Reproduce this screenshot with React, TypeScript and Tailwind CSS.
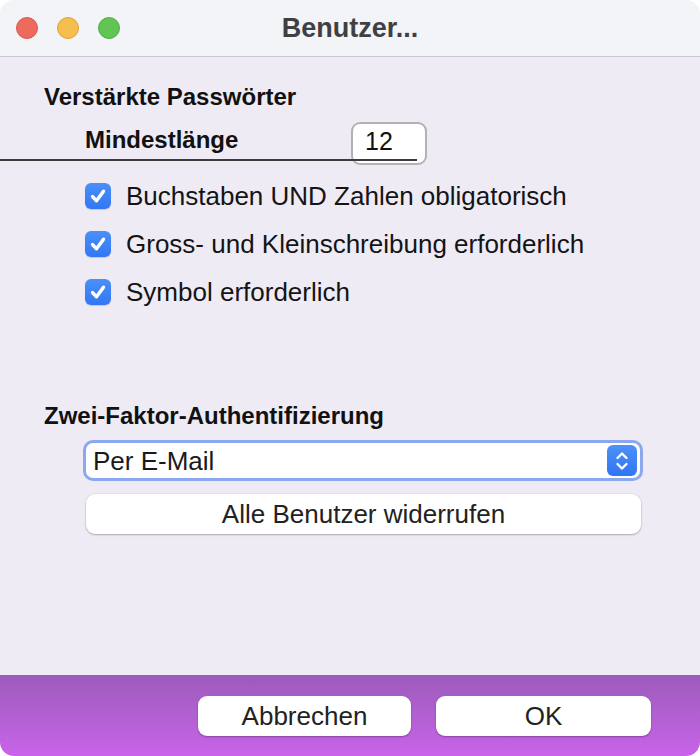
import React from "react";

const font = { fontFamily: '"Liberation Sans", Arial, Helvetica, sans-serif' };

function Check({ label }: { label: string }) {
  return (
    <div className="flex h-[48px] items-center pl-[85px]">
      <div className="flex h-[26px] w-[26px] items-center justify-center rounded-[6px] bg-gradient-to-b from-[#4b90f8] to-[#3276f5] shadow-[0_1px_1px_rgba(0,0,0,0.15)]">
        <svg width="20" height="20" viewBox="0 0 20 20">
          <path d="M4.5 10.5 L8.5 14.8 L15.5 5.2" fill="none" stroke="white" strokeWidth="3.4" strokeLinecap="round" strokeLinejoin="round" />
        </svg>
      </div>
      <span className="ml-[15px] text-[26px] leading-none text-[#141414]">{label}</span>
    </div>
  );
}

export default function App() {
  return (
    <div className="h-[756px] w-[700px] bg-white" style={font}>
      <div className="flex h-full flex-col overflow-hidden rounded-[14px]">
        <div className="grid h-[57px] shrink-0 grid-cols-[1fr_auto_1fr] items-center border-b border-[#cbc6d2] bg-[#f2f4f8]">
          <div className="flex items-center gap-[19px] pl-[16px]">
            <div className="h-[22px] w-[22px] rounded-full border border-[#d9574c] bg-[#ee6a5f]" />
            <div className="h-[22px] w-[22px] rounded-full border border-[#dea23a] bg-[#f5be4f]" />
            <div className="h-[22px] w-[22px] rounded-full border border-[#4fae43] bg-[#61c554]" />
          </div>
          <div className="text-[27px] font-bold leading-none text-[#404042]">Benutzer...</div>
          <div />
        </div>

        <div className="flex flex-1 flex-col bg-[#eeebf5]">
          <div className="mt-[26px] pl-[44px] text-[24px] font-bold leading-[28px] text-[#111]">Verstärkte Passwörter</div>

          <div className="relative mt-[11px] flex h-[43px] items-start">
            <div className="w-[351px] pl-[85px] pt-[4px] text-[24px] font-bold leading-[28px] text-[#111]">Mindestlänge</div>
            <div className="h-[43px] w-[76px] rounded-[9px] border-2 border-[#b3b1b6] bg-white pl-[12px] pt-[3px] text-[25px] leading-[28px] text-[#111]">12</div>
            <div className="absolute left-0 top-[37px] h-[2px] w-[417px] bg-[#3c3c3c]" />
          </div>

          <div className="mt-[7px] flex flex-col">
            <Check label="Buchstaben UND Zahlen obligatorisch" />
            <Check label="Gross- und Kleinschreibung erforderlich" />
            <Check label="Symbol erforderlich" />
          </div>

          <div className="mt-[86px] pl-[44px] text-[24px] font-bold leading-[28px] text-[#111]">Zwei-Faktor-Authentifizierung</div>

          <div className="ml-[83px] mt-[10px] flex h-[41px] w-[560px] items-center rounded-[10px] border-[3px] border-[#8ba7ef] bg-white pl-[7px] pr-[3px]">
            <span className="flex-1 text-[26px] leading-none text-[#1a1a1a]">Per E-Mail</span>
            <div className="flex h-[31px] w-[30px] items-center justify-center rounded-[6px] bg-gradient-to-b from-[#4d91f8] to-[#3174f4]">
              <svg width="16" height="24" viewBox="0 0 16 24">
                <path d="M3.5 9 L8 4.5 L12.5 9" fill="none" stroke="white" strokeWidth="2.4" strokeLinecap="round" strokeLinejoin="round" />
                <path d="M3.5 15 L8 19.5 L12.5 15" fill="none" stroke="white" strokeWidth="2.4" strokeLinecap="round" strokeLinejoin="round" />
              </svg>
            </div>
          </div>

          <div className="ml-[86px] mt-[13px] flex h-[40px] w-[555px] items-center justify-center rounded-[9px] bg-white text-[26px] leading-none text-[#222] shadow-[0_1px_2px_rgba(0,0,0,0.25),0_0_0_0.5px_rgba(0,0,0,0.08)]">
            Alle Benutzer widerrufen
          </div>
        </div>

        <div className="flex h-[81px] shrink-0 items-start justify-end gap-[25px] bg-gradient-to-b from-[#9c5bbb] to-[#c964ea] pr-[49px] pt-[21px]">
          <div className="flex h-[40px] w-[213px] items-center justify-center rounded-[9px] bg-white text-[26px] leading-none text-[#222] shadow-[0_1px_2px_rgba(0,0,0,0.3)]">Abbrechen</div>
          <div className="flex h-[40px] w-[215px] items-center justify-center rounded-[9px] bg-white text-[26px] leading-none text-[#222] shadow-[0_1px_2px_rgba(0,0,0,0.3)]">OK</div>
        </div>
      </div>
    </div>
  );
}
